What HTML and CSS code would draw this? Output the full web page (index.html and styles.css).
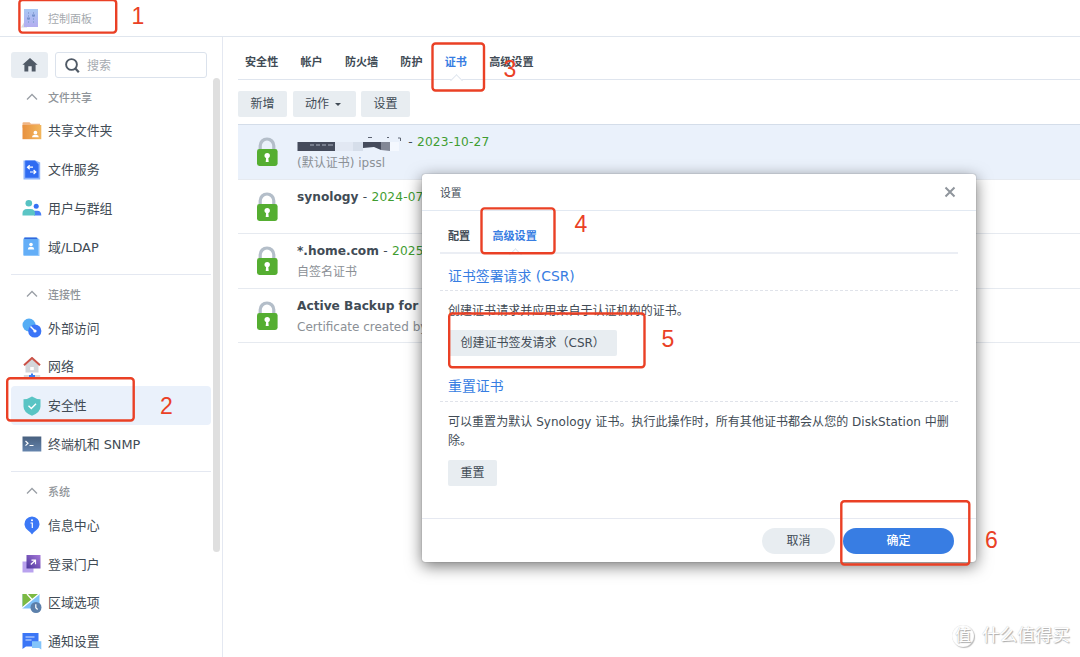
FILE: index.html
```
<!DOCTYPE html>
<html lang="zh-CN">
<head>
    <meta charset="UTF-8">
    <meta name="viewport" content="width=device-width, initial-scale=1.0">
    <title>控制面板</title>
    <link rel="stylesheet" href="styles.css">
</head>
<body>
    <svg class="defs" width="0" height="0">
        <defs>
            <linearGradient id="gPanel" x1="0" y1="0" x2="0" y2="1"><stop offset="0" stop-color="#a9c8f3"/><stop offset="1" stop-color="#b3adf0"/></linearGradient>
            <linearGradient id="gFolder"><stop offset="0" stop-color="#e8913f"/><stop offset="1" stop-color="#f2b65c"/></linearGradient>
            <linearGradient id="gPortal" x1="0" y1="1" x2="1" y2="0"><stop offset="0" stop-color="#4b359c"/><stop offset="1" stop-color="#a678d8"/></linearGradient>
            <linearGradient id="gTerm" x1="0" y1="0" x2="0" y2="1"><stop offset="0" stop-color="#48607f"/><stop offset="1" stop-color="#6484ad"/></linearGradient>
            <symbol id="lock" viewBox="0 0 22 30">
                <path d="M4.2 14V8.8a6.8 6.8 0 0 1 13.6 0V14" fill="none" stroke="#b4bec9" stroke-width="3.2"/>
                <rect x="1" y="12" width="20.6" height="17" rx="2.4" fill="#55ae31"/>
                <circle cx="11.2" cy="18.6" r="2.7" fill="#fff"/>
                <path d="M10.2 19.5h2l.5 5.5h-3z" fill="#fff"/>
            </symbol>
            <symbol id="chevron" viewBox="0 0 12 8">
                <path d="M1 6.5L6 1.5l5 5" fill="none" stroke="#9a9fa6" stroke-width="1.3"/>
            </symbol>
        </defs>
    </svg>

    <header class="titlebar">
        <svg class="titlebar-icon" width="17" height="19" viewBox="0 0 17 19">
            <path d="M0 18.5l3-5h3v5z" fill="#d8d9de"/>
            <rect x="3" y="0" width="14" height="18" fill="url(#gPanel)"/>
            <path d="M7.5 3v12M12.5 3v12" stroke="#8ea4d8" stroke-dasharray="2 1"/>
            <path d="M6 9.5h3M11 6.5h3" stroke="#7592cd" stroke-width="2"/>
        </svg>
        <span>控制面板</span>
    </header>

    <div class="window">
        <aside class="sidebar">
            <div class="search-row">
                <div class="home-btn">
                    <svg width="16" height="14" viewBox="0 0 16 14"><path d="M8 0l7.6 6.8h-2V13.5H9.7V8.3H6.3v5.2H2.4V6.8h-2z" fill="#505a66"/></svg>
                </div>
                <div class="search-box">
                    <svg width="15" height="15" viewBox="0 0 15 15" fill="none" stroke="#505a66"><circle cx="6.5" cy="6.5" r="5.4" stroke-width="1.9"/><path d="M10.4 10.4l3.4 3.8" stroke-width="2.2"/></svg>
                    <span>搜索</span>
                </div>
            </div>

            <nav class="menu">
                <div class="group">
                    <div class="group-title"><svg width="12" height="8"><use href="#chevron"/></svg>文件共享</div>
                    <div class="item">
                        <svg class="icon" viewBox="0 0 20 20"><path d="M.5 4V2.2q0-1 1-1h6l1.5 1.5H18v4H.5z" fill="#f0b583"/><path d="M.5 4h18.8v14.2H.5z" fill="url(#gFolder)"/><circle cx="13.4" cy="11.7" r="1.9" fill="#fff"/><path d="M10 16.3q.2-2.2 2-2.2h2.8q1.8 0 2 2.2z" fill="#fff"/></svg>
                        共享文件夹
                    </div>
                    <div class="item">
                        <svg class="icon" viewBox="0 0 20 20"><path d="M1.5.5h12l4.7 2v17H1.5z" fill="#8db3fb"/><path d="M3.2.5H13l3.6 4v13.2H3.2z" fill="#2f6bf2"/><path d="M11 7.2H5.5m2.2-2l-2.2 2 2.2 2M8 12h5.8m-2.2-2l2.2 2-2.2 2" fill="none" stroke="#fff" stroke-width="1.2"/></svg>
                        文件服务
                    </div>
                    <div class="item">
                        <svg class="icon" viewBox="0 0 20 20"><circle cx="14.2" cy="8.3" r="2.5" fill="#3572f5"/><path d="M12 17.5v-4.7h3.3q4 0 4 4.7z" fill="#4b82f6"/><circle cx="6.8" cy="5.3" r="3.3" fill="#57c2c3"/><path d="M.5 17.5v-2Q.5 11 5 11h3.500q4.500 0 4.500 4.500v2z" fill="#5bc5c5"/></svg>
                        用户与群组
                    </div>
                    <div class="item">
                        <svg class="icon" viewBox="0 0 20 20"><path d="M2.5.5H15l2.5 2V19h-16V1.5z" fill="#8fc6fb"/><path d="M2.5.5h12l1.500 2H2z" fill="#3268dd"/><path d="M1.500 2.200H16V18H1.500z" fill="#63aef7"/><circle cx="9" cy="7.600" r="1.800" fill="#fff"/><path d="M5.800 12.400q.2-2.400 2-2.400h2.400q1.800 0 2 2.400z" fill="#fff"/></svg>
                        域/LDAP
                    </div>
                </div>

                <div class="group">
                    <div class="group-title"><svg width="12" height="8"><use href="#chevron"/></svg>连接性</div>
                    <div class="item">
                        <svg class="icon" viewBox="0 0 20 20"><circle cx="7" cy="7" r="6.5" fill="#55adf5"/><circle cx="12.8" cy="13" r="6.6" fill="#3b75f7"/><path d="M8.5 8.5l4 4" stroke="#fff" stroke-width="1.4"/><circle cx="13" cy="13" r="1.6" fill="#fff"/></svg>
                        外部访问
                    </div>
                    <div class="item">
                        <svg class="icon" viewBox="0 0 20 20"><path d="M3.5 8L10 2l6.5 6v7.5h-13z" fill="#d3d6da"/><path d="M2 8.3L10 1l8 7.300" fill="none" stroke="#ca5146" stroke-width="2"/><path d="M8.2 10h3.6v3.2H8.2z" fill="#fff"/><path d="M1.800 19h16.400" stroke="#d3d6da" stroke-width="1.800"/><path d="M9 16.500h2v1.500h2v2H7v-2h2z" fill="#3c7cf0"/></svg>
                        网络
                    </div>
                    <div class="item active">
                        <svg class="icon" viewBox="0 0 20 20"><path d="M10 .6q4 2.7 8.500 2.700v7.200q0 6-8.500 9.200-8.500-3.200-8.500-9.200V3.300Q6 3.300 10 .6z" fill="#59c4c4"/><path d="M6.500 9.800l2.800 2.700 4.700-4.800" fill="none" stroke="#fff" stroke-width="1.400"/></svg>
                        安全性
                    </div>
                    <div class="item">
                        <svg class="icon" viewBox="0 0 20 20"><path d="M.5 2.500h18.800v15H.5z" fill="url(#gTerm)"/><path d="M3.500 7L6 9.300l-2.500 2.300M7.500 11.500h4" fill="none" stroke="#fff" stroke-width="1.200"/></svg>
                        终端机和 SNMP
                    </div>
                </div>

                <div class="group">
                    <div class="group-title"><svg width="12" height="8"><use href="#chevron"/></svg>系统</div>
                    <div class="item">
                        <svg class="icon" viewBox="0 0 20 20"><path d="M10 19.500q-1.500-2.500-4.200-4.300a7.500 7.500 0 1 1 8.400 0Q11.500 17 10 19.500z" fill="#3b78f6"/><circle cx="10" cy="5.200" r="1" fill="#fff"/><path d="M8.500 8h1.800v5" fill="none" stroke="#fff" stroke-width="1.200"/></svg>
                        信息中心
                    </div>
                    <div class="item">
                        <svg class="icon" viewBox="0 0 20 20"><path d="M.5 7.500h11v11H.5z" fill="#b9a2ee"/><path d="M4.500 1h14v13.500h-14z" fill="url(#gPortal)"/><path d="M8.800 10.500l4.700-4.300M9.500 6.200h4v4" fill="none" stroke="#fff" stroke-width="1.200"/></svg>
                        登录门户
                    </div>
                    <div class="item">
                        <svg class="icon" viewBox="0 0 20 20"><path d="M.5 1h17v14.500H.5z" fill="#7fc0f8"/><path d="M.5 1h16L.5 14z" fill="#7cba43"/><path d="M.3 14.800L17 1M5 1l5 5.500" fill="none" stroke="#fff" stroke-width="1.300"/><circle cx="14" cy="14.500" r="5.500" fill="#5c80ab"/><path d="M13.800 11.300v3.500l1.800 1.700" fill="none" stroke="#fff" stroke-width="1.200"/></svg>
                        区域选项
                    </div>
                    <div class="item">
                        <svg class="icon" viewBox="0 0 20 20"><path d="M.5 1h16v13.500H4L.5 17z" fill="#3b76f6"/><path d="M3.500 5h9M3.500 8h6" stroke="#d5e3fd" stroke-width="1.200"/><path d="M10 9.200h9.300v8.300L17 16h-7z" fill="#83c4fa"/></svg>
                        通知设置
                    </div>
                </div>
            </nav>
            <div class="scrollbar"></div>
        </aside>

        <main class="content">
            <div class="tabs">
                <span>安全性</span>
                <span>帐户</span>
                <span>防火墙</span>
                <span>防护</span>
                <span class="current">证书</span>
                <span>高级设置</span>
            </div>

            <div class="toolbar">
                <div class="btn">新增</div>
                <div class="btn">动作<i class="caret"></i></div>
                <div class="btn">设置</div>
            </div>

            <div class="cert-list">
                <div class="cert selected">
                    <svg class="lock" width="22" height="30"><use href="#lock"/></svg>
                    <div class="cert-text">
                        <div class="cert-name">
                            <!-- redacted domain -->
                            <svg class="redacted" width="105" height="16" viewBox="0 0 105 16">
                                <path d="M38 6h28v9H38z" fill="#e2e8f3"/>
                                <path d="M56 6h10v9H56z" fill="#d6deea"/>
                                <path d="M93 6h9v9h-9z" fill="#f4f8fe"/>
                                <path d="M.5 6H38v9H.5z" fill="#454b5b"/>
                                <path d="M13 9h4m2 0h4m2 0h4m2 0h5" stroke="#aab1bf"/>
                                <path d="M66 6h18v8l-7-3-11 1z" fill="#454b5b"/>
                                <path d="M84 6h9v9l-9-1z" fill="#828795"/>
                                <path d="M71 1.500h4M90 1.500h2M101 2h2.500v3" fill="none" stroke="#5d6472"/>
                            </svg>
                            <span class="dash"> - </span><span class="date">2023-10-27</span>
                        </div>
                        <div class="cert-desc">(默认证书) ipssl</div>
                    </div>
                </div>
                <div class="cert">
                    <svg class="lock" width="22" height="30"><use href="#lock"/></svg>
                    <div class="cert-text">
                        <div class="cert-name"><b>synology</b><span class="dash"> - </span><span class="date">2024-07-16</span></div>
                    </div>
                </div>
                <div class="cert">
                    <svg class="lock" width="22" height="30"><use href="#lock"/></svg>
                    <div class="cert-text">
                        <div class="cert-name"><b>*.home.com</b><span class="dash"> - </span><span class="date">2025-01-01</span></div>
                        <div class="cert-desc">自签名证书</div>
                    </div>
                </div>
                <div class="cert">
                    <svg class="lock" width="22" height="30"><use href="#lock"/></svg>
                    <div class="cert-text">
                        <div class="cert-name"><b>Active Backup for Business</b></div>
                        <div class="cert-desc">Certificate created by Synology</div>
                    </div>
                </div>
            </div>
        </main>
    </div>

    <div class="dialog">
        <div class="dialog-title">
            <span>设置</span>
            <svg width="12" height="12" viewBox="0 0 12 12"><path d="M1.500 1.500l9 9M10.500 1.500l-9 9" stroke="#8f959c" stroke-width="2"/></svg>
        </div>
        <div class="dialog-body">
            <div class="dialog-tabs">
                <span>配置</span>
                <span class="current">高级设置</span>
            </div>
            <h3>证书签署请求 (CSR)</h3>
            <p>创建证书请求并应用来自于认证机构的证书。</p>
            <div class="btn">创建证书签发请求（CSR）</div>
            <h3 class="reset-title">重置证书</h3>
            <p>可以重置为默认 Synology 证书。执行此操作时，所有其他证书都会从您的 DiskStation 中删除。</p>
            <div class="btn">重置</div>
        </div>
        <div class="dialog-footer">
            <div class="pill">取消</div>
            <div class="pill primary">确定</div>
        </div>
    </div>

    <!-- step markers -->
    <svg class="steps" width="1080" height="657" viewBox="0 0 1080 657">
        <g class="step-box">
            <rect x="19.4" y="0" width="96.8" height="32.6" rx="3"/>
            <rect x="7.2" y="378.2" width="126.5" height="42.3" rx="3"/>
            <rect x="432.5" y="43.5" width="51.5" height="47" rx="3"/>
            <rect x="481.5" y="208.4" width="73" height="44.8" rx="3"/>
            <rect x="449.2" y="313.5" width="195.3" height="53.8" rx="3"/>
            <rect x="841.3" y="501.3" width="128" height="63.2" rx="3"/>
        </g>
        <g class="step-no">
            <text x="138" y="24">1</text>
            <text x="166.5" y="414">2</text>
            <text x="509.8" y="76.5">3</text>
            <text x="581" y="231.5">4</text>
            <text x="668" y="346.5">5</text>
            <text x="991.5" y="548">6</text>
        </g>
    </svg>

    <div class="watermark">
        <span class="logo">值</span>
        <span>什么值得买</span>
    </div>
</body>
</html>
```
FILE: styles.css
```
* {
    box-sizing: border-box;
}

body {
    margin: 0;
    width: 1080px;
    height: 657px;
    overflow: hidden;
    position: relative;
    background: #fff;
    color: #414b55;
    font-family: "DejaVu Sans", "Noto Sans CJK SC", sans-serif;
    font-size: 12px;
}

svg {
    display: block;
    flex: none;
}

.defs {
    position: absolute;
}

/* window header */
.titlebar {
    display: flex;
    align-items: center;
    height: 37px;
    padding-left: 21px;
    border-bottom: 1px solid #e0e6ee;
    font-size: 11px;
    color: #a5a9ae;
}

.titlebar-icon {
    margin-right: 10px;
}

.window {
    display: flex;
    height: 620px;
}

/* sidebar */
.sidebar {
    position: relative;
    width: 223px;
    padding: 15px 0 0 11px;
    border-right: 1px solid #e4e8f1;
    overflow: hidden;
}

.search-row {
    display: flex;
    gap: 7px;
    height: 26px;
}

.home-btn {
    width: 37px;
    border-radius: 3px;
    background: #e8edf2;
    display: flex;
    align-items: center;
    justify-content: center;
}

.search-box {
    width: 152px;
    border: 1px solid #dbe2ec;
    border-radius: 3px;
    display: flex;
    align-items: center;
    gap: 7px;
    padding-left: 9px;
    color: #a6abb1;
}

.search-box span {
    padding-bottom: 1px;
}

.menu {
    width: 200px;
    margin-top: 4px;
}

.group + .group {
    margin-top: 8px;
    padding-top: 4px;
    border-top: 1px solid #e4e8f1;
}

.group-title {
    display: flex;
    align-items: center;
    gap: 10px;
    height: 29px;
    padding-left: 15px;
    font-size: 11px;
    font-weight: 500;
    color: #8f9499;
}

.item {
    display: flex;
    align-items: center;
    gap: 6px;
    height: 38.8px;
    padding: 0 0 1px 11px;
    border-radius: 4px;
    font-size: 12.9px;
    white-space: nowrap;
}

.item.active {
    background: #eaf1fb;
}

.icon {
    width: 20px;
    height: 20px;
    position: relative;
    top: 1px;
}

.scrollbar {
    position: absolute;
    left: 213px;
    top: 41px;
    width: 7px;
    height: 474px;
    border-radius: 4px;
    background: #dfdfdf;
}

/* main area */
.content {
    flex: 1;
    padding-left: 15px;
}

.tabs,
.dialog-tabs {
    display: flex;
    gap: 22.2px;
    font-size: 11.1px;
    font-weight: bold;
}

.tabs {
    height: 43px;
    padding-left: 7px;
    line-height: 52px;
    border-bottom: 1px solid #dfe5ee;
}

.current {
    position: relative;
    color: #377de2;
}

.current::after {
    content: "";
    position: absolute;
    left: 50%;
    top: 39px;
    width: 8px;
    height: 8px;
    margin-left: -4px;
    border: solid #dfe5ee;
    border-width: 1px 0 0 1px;
    background: #fff;
    transform: rotate(45deg);
}

.toolbar {
    display: flex;
    gap: 5.5px;
    padding: 11px 0 7px;
}

.btn {
    width: fit-content;
    height: 26px;
    padding: 0 12.5px;
    border-radius: 2px;
    background: #e8edf1;
    line-height: 26px;
    white-space: nowrap;
}

.caret {
    display: inline-block;
    margin: 0 2px 2px 6px;
    border: solid transparent;
    border-width: 3px 3px 0;
    border-top-color: #414b55;
}

.cert-list {
    border-top: 1px solid #d4dde9;
}

.cert {
    display: flex;
    height: 54.6px;
    padding: 12px 0 0 18px;
    border-bottom: 1px solid #e6eaf0;
    white-space: nowrap;
}

.cert.selected {
    background: #eaf1fb;
}

.cert-text {
    margin: -5px 0 0 19px;
    line-height: 20px;
}

.cert-name {
    display: flex;
    height: 20px;
    white-space: pre;
    font-size: 12.2px;
}

.cert-desc {
    padding-top: 1px;
    color: #8b9096;
}

.redacted {
    margin: 4px 2px 0 0;
}

.dash {
    letter-spacing: 0.3px;
}

.date {
    color: #3f9d31;
    letter-spacing: 0.15px;
}

/* dialog */
.dialog {
    position: absolute;
    left: 422px;
    top: 174px;
    width: 554px;
    height: 388px;
    display: flex;
    flex-direction: column;
    border-radius: 3px;
    background: #fff;
    box-shadow: 0 4px 16px rgba(0, 0, 0, 0.55), 0 0 1px rgba(0, 0, 0, 0.5);
}

.dialog-title {
    display: flex;
    align-items: center;
    justify-content: space-between;
    height: 37px;
    padding: 0 20px 0 18px;
    border-bottom: 1px solid #e2e9f2;
    font-size: 10.8px;
}

.dialog-body {
    flex: 1;
    padding: 0 18px;
}

.dialog-tabs {
    height: 43px;
    padding-left: 8px;
    line-height: 52px;
    border-bottom: 2px solid #ebeef4;
}

.dialog h3 {
    margin: 0 0 11px;
    padding-left: 8px;
    height: 37px;
    line-height: 45px;
    border-bottom: 1px dashed #e0e3ea;
    color: #377de2;
    font-size: 13.9px;
    font-weight: normal;
}

.dialog h3.reset-title {
    margin-top: 9px;
    line-height: 43px;
}

.dialog p {
    margin: 0 0 9px 8px;
    line-height: 19px;
    letter-spacing: 0.04px;
}

.dialog-body > .btn {
    margin-left: 8px;
}

.dialog-footer {
    display: flex;
    justify-content: flex-end;
    gap: 8px;
    height: 44px;
    padding: 9px 22px 0 0;
    border-top: 1px solid #e6e9f1;
}

.pill {
    width: 73px;
    height: 26px;
    border-radius: 13px;
    background: #e8edf1;
    line-height: 26px;
    text-align: center;
}

.pill.primary {
    width: 111px;
    background: #387de3;
    color: #fff;
    font-weight: 500;
}

/* annotations on top */
.steps {
    position: absolute;
    left: 0;
    top: 0;
}

.step-box {
    fill: none;
    stroke: #ea4025;
    stroke-width: 2.4px;
}

.step-no {
    fill: #ea4025;
    font-family: "Liberation Sans", sans-serif;
    font-size: 23px;
    text-anchor: middle;
}

.watermark {
    position: absolute;
    left: 952px;
    top: 624px;
    display: flex;
    align-items: center;
    gap: 8px;
    height: 23px;
    color: #fff;
    font-size: 17.6px;
    line-height: 23px;
    text-shadow: 1px 1px 1px #aaa, 0 0 1px #bbb;
    white-space: nowrap;
}

.watermark .logo {
    width: 22px;
    height: 22px;
    border-radius: 50%;
    font-size: 16px;
    line-height: 21px;
    text-align: center;
    box-shadow: 1px 1px 1px #bbb, inset 0 0 1px #ccc;
}
```
